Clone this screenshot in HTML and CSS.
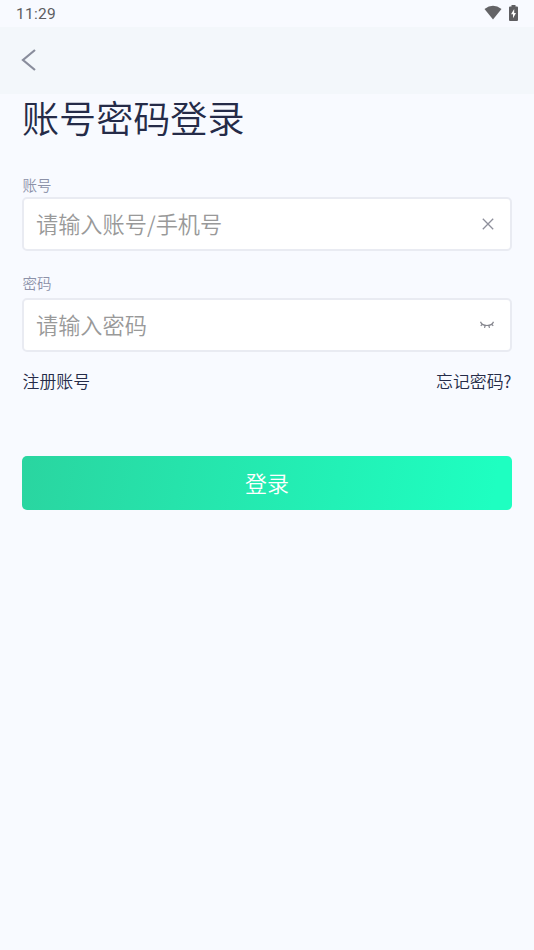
FILE: index.html
```html
<!DOCTYPE html>
<html lang="zh-CN">
<head>
<meta charset="utf-8">
<title>账号密码登录</title>
<link rel="stylesheet" href="styles.css">
</head>
<body>
<div class="status">
  <span class="time">11:29</span>
  <div class="status-icons">
    <svg width="18" height="15" viewBox="0 0 18 15"><path d="M.5 3.900Q9-2.500 17.500 3.900L9 14.500Z" fill="#636366"/></svg>
    <svg width="9" height="16" viewBox="0 0 9 16"><path d="M2.500 1.500V0h4v1.500H8q1 0 1 1V15q0 1-1 1H1q-1 0-1-1V2.500q0-1 1-1Z" fill="#5e5e61"/><path d="M5.200 4 2 9.300h2v4L7 8H5.200Z" fill="#fff"/></svg>
  </div>
</div>
<header class="nav">
  <svg width="16" height="24" viewBox="0 0 16 24" fill="none" stroke="#898d9c" stroke-width="2.200"><path d="M14 2 2 12l12 10"/></svg>
</header>
<main>
  <h1>账号密码登录</h1>
  <form>
    <label for="account">账号</label>
    <div class="field">
      <input id="account" type="text" placeholder="请输入账号/手机号">
      <svg width="12" height="12" viewBox="0 0 12 12" fill="none" stroke="#8e8f9b" stroke-width="1.300"><path d="m.8.8 10.400 10.400M11.200.8.8 11.200"/></svg>
    </div>
    <label class="password-label" for="password">密码</label>
    <div class="field">
      <input id="password" type="password" placeholder="请输入密码">
      <svg class="eye" width="14" height="8" viewBox="0 0 14 8" fill="none" stroke="#85868e" stroke-width="1.200"><path d="M.5.8Q2 4.500 7 4.500T13.500.8M2.400 3 .8 4.900M5.200 4.500l-.7 2.300M8.800 4.500l.7 2.300M11.600 3l1.600 1.900"/></svg>
    </div>
    <div class="links"><span>注册账号</span><span>忘记密码?</span></div>
    <button type="button">登录</button>
  </form>
</main>
</body>
</html>
```
FILE: styles.css
```css
* { box-sizing: border-box; }
body {
  margin: 0;
  min-height: 950px;
  background: #f8faff;
  font-family: "Noto Sans CJK SC", sans-serif;
  font-weight: 350;
  color: #252b48;
}
svg { display: block; flex: none; }
.status {
  height: 27px;
  padding: 0 16px;
  display: flex;
  align-items: center;
  justify-content: space-between;
}
.time {
  font: 400 15.500px/28px Roboto, sans-serif;
  letter-spacing: .3px;
  color: #5c5d61;
}
.status-icons { display: flex; align-items: center; gap: 7px; height: 25px; align-self: flex-start; }
.nav {
  height: 67px;
  padding: 0 21px 1px;
  display: flex;
  align-items: center;
  background: #f3f7fb;
}
main { padding: 0 22px; }
h1 {
  margin: 0;
  height: 80px;
  font-size: 37.100px;
  line-height: 47px;
  font-weight: 350;
}
label {
  display: block;
  height: 23px;
  padding-left: .5px;
  font-size: 14.500px;
  line-height: 21px;
  color: #8c91a8;
}
.password-label { height: 26px; margin-top: 21px; line-height: 21px; }
.field {
  height: 54px;
  padding: 0 16px 0 12px;
  display: flex;
  align-items: center;
  background: #fff;
  border: 2px solid #e9ebf2;
  border-radius: 5px;
}
input {
  flex: 1;
  min-width: 0;
  height: 50px;
  padding: 0 0 3px;
  border: 0;
  outline: 0;
  background: none;
  font: inherit;
  font-size: 22.200px;
}
input::placeholder { color: #999; opacity: 1; }
.links {
  display: flex;
  justify-content: space-between;
  margin-top: 16px;
  padding: 0 .5px;
  font-size: 16.900px;
  line-height: 25px;
}
button {
  display: block;
  width: 100%;
  height: 54px;
  margin-top: 63px;
  padding: 0 0 3px;
  border: 0;
  border-radius: 5px;
  background: linear-gradient(100deg, #2ad5a0, #1effc1 96%);
  color: #fff;
  font: inherit;
  font-size: 22px;
  line-height: 50px;
}
```
